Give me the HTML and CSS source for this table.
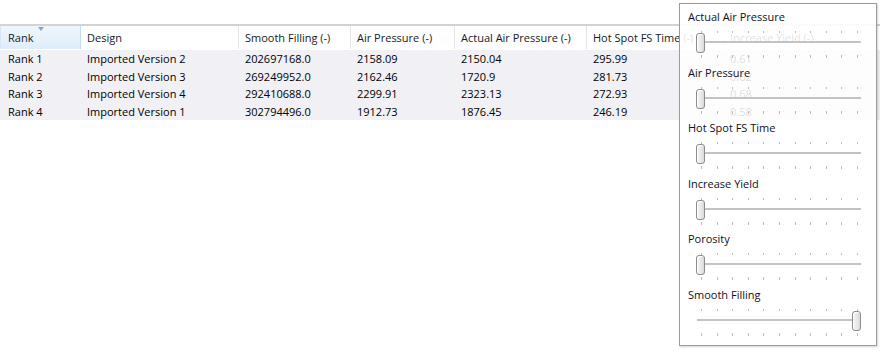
FILE: index.html
```html
<!DOCTYPE html>
<html>
<head>
<meta charset="utf-8">
<link rel="stylesheet" href="styles.css">
</head>
<body>
<div class="view">
  <div class="table">
    <div class="head">
      <div class="hcell sorted">Rank<span class="sort-arrow"></span></div>
      <div class="hcell">Design</div>
      <div class="hcell">Smooth Filling (-)</div>
      <div class="hcell">Air Pressure (-)</div>
      <div class="hcell">Actual Air Pressure (-)</div>
      <div class="hcell">Hot Spot FS Time (-)</div>
      <div class="hcell">Increase Yield (-)</div>
    </div>
    <div class="body">
      <div class="row"><div class="cell">Rank 1</div><div class="cell">Imported Version 2</div><div class="cell">202697168.0</div><div class="cell">2158.09</div><div class="cell">2150.04</div><div class="cell">295.99</div><div class="cell">0.61</div></div>
      <div class="row"><div class="cell">Rank 2</div><div class="cell">Imported Version 3</div><div class="cell">269249952.0</div><div class="cell">2162.46</div><div class="cell">1720.9</div><div class="cell">281.73</div><div class="cell">0.62</div></div>
      <div class="row"><div class="cell">Rank 3</div><div class="cell">Imported Version 4</div><div class="cell">292410688.0</div><div class="cell">2299.91</div><div class="cell">2323.13</div><div class="cell">272.93</div><div class="cell">0.68</div></div>
      <div class="row"><div class="cell">Rank 4</div><div class="cell">Imported Version 1</div><div class="cell">302794496.0</div><div class="cell">1912.73</div><div class="cell">1876.45</div><div class="cell">246.19</div><div class="cell">0.58</div></div>
    </div>
  </div>

  <div class="panel">
    <div class="group">
      <div class="label">Actual Air Pressure</div>
      <div class="slider">
        <div class="ticks top"><i></i><i></i><i></i><i></i><i></i><i></i><i></i><i></i><i></i><i></i><i></i></div>
        <div class="track"></div>
        <div class="ticks bottom"><i></i><i></i><i></i><i></i><i></i><i></i><i></i><i></i><i></i><i></i><i></i></div>
        <div class="thumb min"></div>
      </div>
    </div>
    <div class="group">
      <div class="label">Air Pressure</div>
      <div class="slider">
        <div class="ticks top"><i></i><i></i><i></i><i></i><i></i><i></i><i></i><i></i><i></i><i></i><i></i></div>
        <div class="track"></div>
        <div class="ticks bottom"><i></i><i></i><i></i><i></i><i></i><i></i><i></i><i></i><i></i><i></i><i></i></div>
        <div class="thumb min"></div>
      </div>
    </div>
    <div class="group">
      <div class="label">Hot Spot FS Time</div>
      <div class="slider">
        <div class="ticks top"><i></i><i></i><i></i><i></i><i></i><i></i><i></i><i></i><i></i><i></i><i></i></div>
        <div class="track"></div>
        <div class="ticks bottom"><i></i><i></i><i></i><i></i><i></i><i></i><i></i><i></i><i></i><i></i><i></i></div>
        <div class="thumb min"></div>
      </div>
    </div>
    <div class="group">
      <div class="label">Increase Yield</div>
      <div class="slider">
        <div class="ticks top"><i></i><i></i><i></i><i></i><i></i><i></i><i></i><i></i><i></i><i></i><i></i></div>
        <div class="track"></div>
        <div class="ticks bottom"><i></i><i></i><i></i><i></i><i></i><i></i><i></i><i></i><i></i><i></i><i></i></div>
        <div class="thumb min"></div>
      </div>
    </div>
    <div class="group">
      <div class="label">Porosity</div>
      <div class="slider">
        <div class="ticks top"><i></i><i></i><i></i><i></i><i></i><i></i><i></i><i></i><i></i><i></i><i></i></div>
        <div class="track"></div>
        <div class="ticks bottom"><i></i><i></i><i></i><i></i><i></i><i></i><i></i><i></i><i></i><i></i><i></i></div>
        <div class="thumb min"></div>
      </div>
    </div>
    <div class="group">
      <div class="label">Smooth Filling</div>
      <div class="slider">
        <div class="ticks top"><i></i><i></i><i></i><i></i><i></i><i></i><i></i><i></i><i></i><i></i><i></i></div>
        <div class="track"></div>
        <div class="ticks bottom"><i></i><i></i><i></i><i></i><i></i><i></i><i></i><i></i><i></i><i></i><i></i></div>
        <div class="thumb max"></div>
      </div>
    </div>
  </div>
</div>
</body>
</html>
```

FILE: styles.css
```css
html, body {
  margin: 0;
  padding: 0;
  background: #ffffff;
}

body {
  width: 880px;
  height: 351px;
  overflow: hidden;
  font-family: "Open Sans", "Noto Sans", sans-serif;
  font-size: 11px;
  color: #000000;
}

.view {
  position: relative;
  width: 880px;
  height: 351px;
  padding-top: 24px;
  box-sizing: border-box;
}

.table {
  border-top: 2px solid #d3d3d3;
  width: 900px;
}

.head,
.row {
  display: grid;
  grid-template-columns: 81px 158px 112px 104px 132px 137px 176px;
}

.head {
  height: 23px;
}

.hcell {
  position: relative;
  display: flex;
  align-items: center;
  padding-left: 6px;
  border-right: 1px solid #e3e3e3;
  color: #141a26;
  white-space: nowrap;
  overflow: hidden;
}

.hcell:first-child {
  padding-left: 7px;
}

.hcell.sorted {
  background: linear-gradient(#eef6fd, #dfedf9);
  border-right: 1px solid #c4dcf0;
  border-left: 1px solid #d6e6f4;
}

.sort-arrow {
  position: absolute;
  left: 37px;
  top: 1px;
  width: 0;
  height: 0;
  border-left: 3.5px solid transparent;
  border-right: 3.5px solid transparent;
  border-top: 4px solid #7fa7d2;
}

.body {
  margin-top: 1px;
  background: #f0f0f5;
}

.row {
  height: 17.5px;
}

.cell {
  display: flex;
  align-items: center;
  padding-left: 6px;
  white-space: nowrap;
  overflow: hidden;
}

.cell:first-child {
  padding-left: 8px;
}

.panel {
  position: absolute;
  left: 679px;
  top: 3px;
  width: 188px;
  height: 336px;
  padding: 5px 0 0 8px;
  border: 1px solid #9c9c9c;
  background: rgba(255, 255, 255, 0.87);
  box-shadow: 1px 1px 2px rgba(0, 0, 0, 0.18);
}

.label {
  height: 16px;
  line-height: 16px;
  color: #10101c;
  white-space: nowrap;
}

.slider {
  position: relative;
  margin-left: 9px;
  width: 164px;
  height: 39.6px;
  padding-top: 6px;
  box-sizing: border-box;
}

.ticks {
  display: flex;
  justify-content: space-between;
  margin-left: 4px;
  width: 157px;
}

.ticks i {
  display: block;
  width: 1px;
  background: #bcbcbc;
}

.ticks.top {
  height: 3px;
}

.ticks.top i {
  height: 2px;
}

.ticks.bottom {
  margin-top: 12px;
  height: 4px;
}

.ticks.bottom i {
  height: 3px;
}

.track {
  margin-top: 7px;
  height: 2px;
  background: #c3c3c3;
}

.thumb {
  position: absolute;
  top: 8px;
  width: 7px;
  height: 18px;
  border: 1px solid #8c8c8c;
  border-radius: 3px;
  background: linear-gradient(90deg, #f7f7f7 0%, #eaeaea 50%, #dadada 100%);
  box-shadow: inset 1px 1px 0 #ffffff;
}

.thumb.min {
  left: -1px;
}

.thumb.max {
  left: 155px;
}
```
